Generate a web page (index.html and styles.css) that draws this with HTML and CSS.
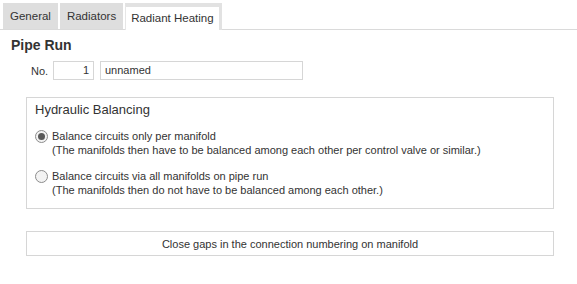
FILE: index.html
```html
<!DOCTYPE html>
<html lang="en">
<head>
    <meta charset="UTF-8">
    <title>Pipe Run</title>
    <link rel="stylesheet" href="styles.css">
</head>
<body>
    <div class="tabs">
        <div class="tab">General</div>
        <div class="tab">Radiators</div>
        <div class="tab active">Radiant Heating</div>
    </div>

    <div class="page">
        <h1 class="title">Pipe Run</h1>

        <div class="name-row">
            <label class="no-label">No.</label>
            <div class="field field-no">1</div>
            <div class="field field-name">unnamed</div>
        </div>

        <fieldset class="group">
            <div class="group-title">Hydraulic Balancing</div>

            <div class="option">
                <span class="radio checked"></span>
                <div class="option-text">
                    Balance circuits only per manifold<br>
                    (The manifolds then have to be balanced among each other per control valve or similar.)
                </div>
            </div>

            <div class="option">
                <span class="radio"></span>
                <div class="option-text">
                    Balance circuits via all manifolds on pipe run<br>
                    (The manifolds then do not have to be balanced among each other.)
                </div>
            </div>
        </fieldset>

        <button class="btn">Close gaps in the connection numbering on manifold</button>
    </div>
</body>
</html>
```

FILE: styles.css
```css
* {
    margin: 0;
    padding: 0;
    box-sizing: border-box;
}

body {
    font-family: 'Liberation Sans', Arial, sans-serif;
    font-size: 11px;
    color: #333;
    background-color: #fff;
    width: 577px;
    height: 284px;
    overflow: hidden;
}

/* Tabs */
.tabs {
    display: flex;
    padding: 3px 0 0 3px;
    border-bottom: 1px solid #dadada;
    height: 30px;
}

.tab {
    background-color: #dedede;
    padding: 0 7px;
    height: 26px;
    line-height: 27px;
    font-size: 11.5px;
    margin-right: 2px;
    color: #333;
}

.tab.active {
    background-color: #fff;
    border-left: 1px solid #e6e6e6;
    border-top: 4px solid #e2e2e2;
    border-right: 3px solid #e2e2e2;
    height: 27px;
    line-height: 23px;
    padding: 0 5px 0 5px;
    margin-right: 0;
    position: relative;
    z-index: 1;
}

/* Conteúdo */
.page {
    padding: 6px 23px 0 26px;
}

.title {
    font-size: 14px;
    font-weight: bold;
    margin-left: -15px;
    height: 18px;
    line-height: 18px;
}

.name-row {
    display: flex;
    align-items: center;
    margin-top: 7px;
    padding-left: 5px;
}

.no-label {
    width: 22px;
}

.field {
    height: 19px;
    line-height: 17px;
    border: 1px solid #d6d6d6;
    padding: 0 4px;
}

.field-no {
    width: 41px;
    text-align: right;
}

.field-name {
    width: 203px;
    margin-left: 6px;
}

/* Grupo */
.group {
    margin-top: 17px;
    border: 1px solid #d6d6d6;
    height: 112px;
    padding: 3px 8px 0 8px;
}

.group-title {
    font-size: 13px;
    line-height: 18px;
    margin-bottom: 10px;
}

.option {
    display: flex;
    align-items: flex-start;
    margin-bottom: 12px;
    line-height: 14px;
}

.radio {
    width: 13px;
    height: 13px;
    border: 1px solid #8c8c8c;
    background-color: #f3f3f3;
    border-radius: 50%;
    margin-top: 1px;
    margin-right: 4px;
    flex-shrink: 0;
    display: flex;
    align-items: center;
    justify-content: center;
}

.radio.checked::after {
    content: '';
    width: 7px;
    height: 7px;
    border-radius: 50%;
    background-color: #5a5a5a;
}

.btn {
    display: block;
    width: 100%;
    margin-top: 22px;
    height: 25px;
    background-color: #fff;
    border: 1px solid #d6d6d6;
    font-family: inherit;
    font-size: 11px;
    color: #333;
}
```
